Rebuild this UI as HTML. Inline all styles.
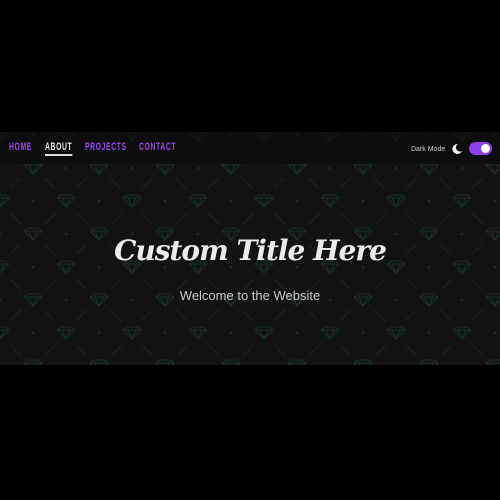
<!DOCTYPE html>
<html><head><style>
html,body{margin:0;padding:0;background:#000;width:500px;height:500px;overflow:hidden}
.sec{position:absolute;left:0;top:132px;width:500px;height:233px;background:#131313;overflow:hidden}
.sec svg.bg{position:absolute;left:0;top:0}
.hdr{position:absolute;left:0;top:0;width:500px;height:32px;background:rgba(10,10,10,0.6)}
.nav{position:absolute;top:9px;left:0;font-family:"Liberation Sans",sans-serif;font-weight:bold;font-size:11px;letter-spacing:1px;color:#9b45f0}
.nav span{position:absolute;white-space:nowrap;transform:scaleX(0.62);transform-origin:0 0}
.about{color:#e6e6e6;border-bottom:2px solid #ddd;padding-bottom:1px}
.dm{position:absolute;left:411px;top:14px;font-family:"Liberation Sans",sans-serif;font-size:7px;color:#ccc}
.tog{position:absolute;left:469px;top:10px;width:23px;height:13px;border-radius:7px;background:#8a3ff0}
.tog:after{content:"";position:absolute;right:2px;top:2px;width:9px;height:9px;border-radius:50%;background:#fff}
h1{position:absolute;left:0;width:500px;top:102px;margin:0;text-align:center;font-family:"DejaVu Serif",serif;font-style:italic;font-weight:bold;font-size:28px;color:#ececec;letter-spacing:-1px}
.sub{position:absolute;left:0;width:500px;top:156px;text-align:center;font-family:"Liberation Sans",sans-serif;font-size:13px;color:#c8c8c8}
</style></head><body>
<div class="sec">
<svg class="bg" width="500" height="233">
<defs>
<g id="d"><path d="M-9,-3 L-5,-6 L5,-6 L9,-3 L0,6 Z M-9,-3 H9 M-4,-3 L0,6 L4,-3" fill="none" stroke="#19302a" stroke-width="1"/></g>
<pattern id="p" width="66" height="66" patternUnits="userSpaceOnUse" x="0" y="3">
<use href="#d" x="33" y="33"/><use href="#d" x="0" y="0"/><use href="#d" x="66" y="0"/><use href="#d" x="0" y="66"/><use href="#d" x="66" y="66"/>
<circle cx="0" cy="33" r="1.2" fill="#19302a"/><circle cx="66" cy="33" r="1.2" fill="#19302a"/><circle cx="33" cy="0" r="1.2" fill="#19302a"/><circle cx="33" cy="66" r="1.2" fill="#19302a"/>
<g stroke="#18261f" stroke-width="1">
<line x1="10" y1="53" x2="21" y2="43"/><line x1="44" y1="43" x2="55" y2="54"/>
<line x1="10" y1="12" x2="21" y2="23"/><line x1="45" y1="23" x2="56" y2="12"/>
</g>
</pattern></defs>
<rect width="500" height="233" fill="url(#p)"/>
</svg>
<div class="hdr"></div>
<div class="nav"><span style="left:9px">HOME</span><span class="about" style="left:45px">ABOUT</span><span style="left:85px">PROJECTS</span><span style="left:139px">CONTACT</span></div>
<div class="dm">Dark Mode</div>
<svg style="position:absolute;left:451px;top:11px" width="12" height="12" viewBox="0 0 12 12"><path d="M7,1 A5,5 0 1 0 11,8 A4,4 0 0 1 7,1 Z" fill="#eee"/></svg>
<div class="tog"></div>
<h1>Custom Title Here</h1>
<div class="sub">Welcome to the Website</div>
</div>
</body></html>
